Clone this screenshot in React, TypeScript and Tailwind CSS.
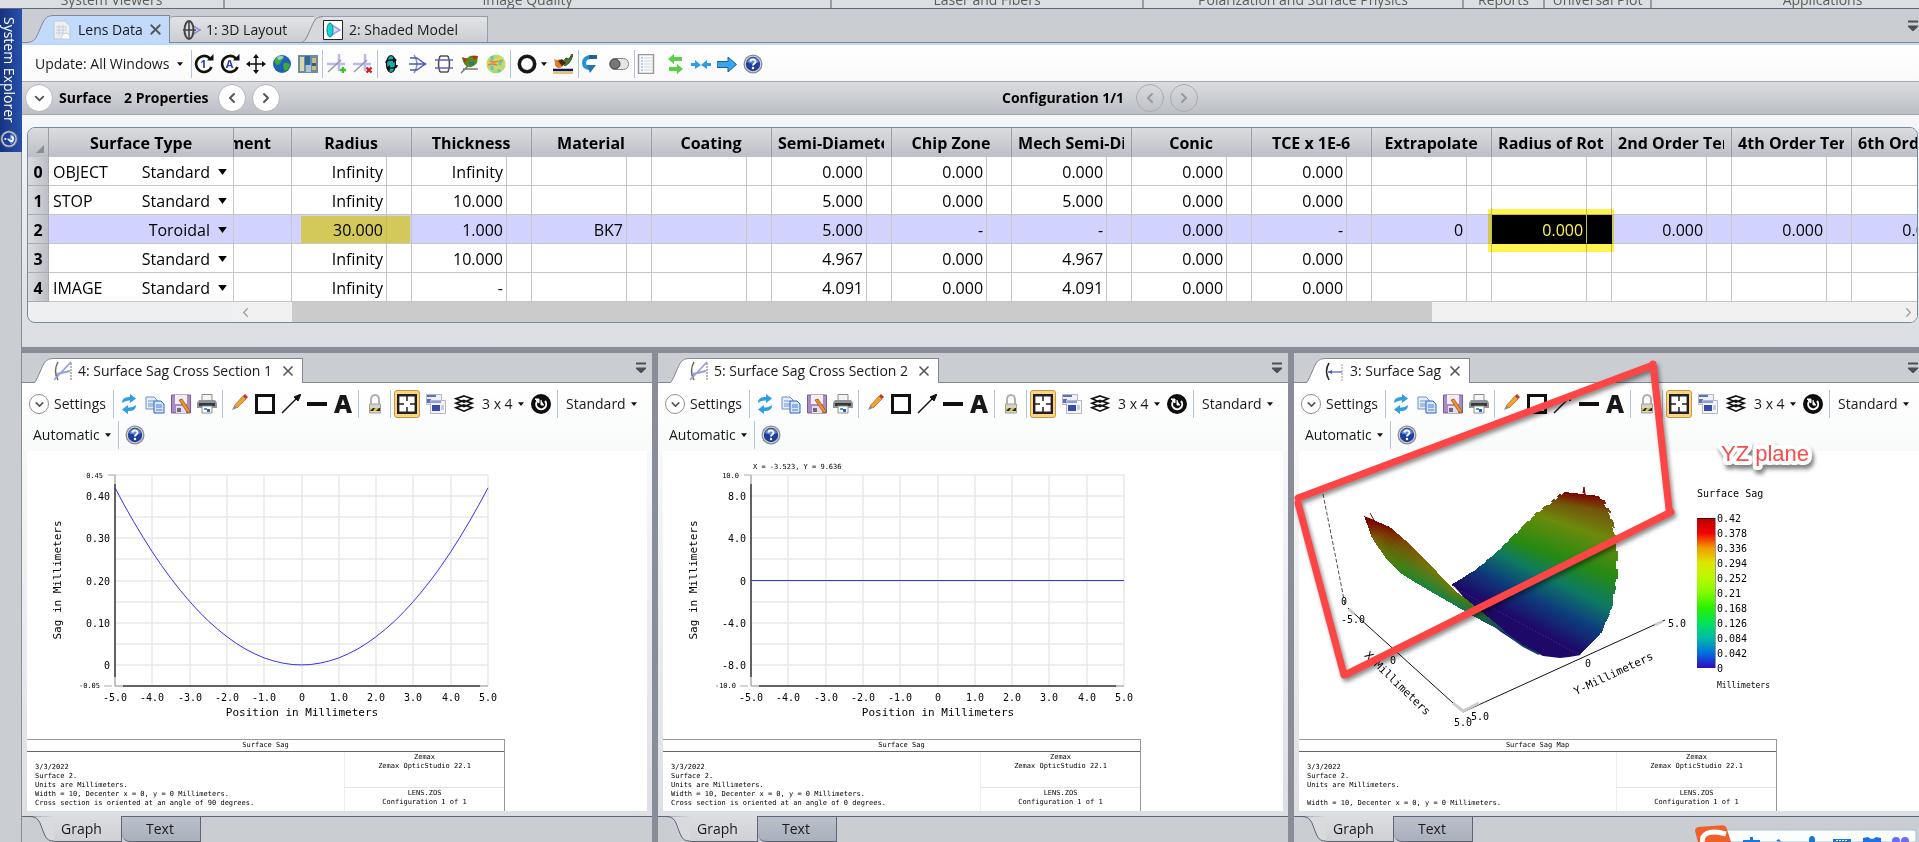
import { ReactNode } from 'react';
import clsx from 'clsx';
import { ChevronDown, ChevronLeft, ChevronRight, X } from 'lucide-react';

interface IconProps {
  children: ReactNode;
  label: string;
  className?: string;
}

// Toolbar glyphs are drawn on a 20x20 grid
const IconButton = ({ children, label, className }: IconProps) => (
  <button type="button" aria-label={label} className={clsx('h-5 w-5 shrink-0', className)}>
    <svg viewBox="0 0 20 20" className="h-5 w-5">{children}</svg>
  </button>
);

const Separator = ({ className }: { className?: string }) => (
  <div className={clsx('h-7 w-px shrink-0 bg-[#b4c6d6]', className)} />
);

const Caret = ({ className }: { className?: string }) => (
  <svg viewBox="0 0 8 5" className={clsx('h-[4px] w-[6px] shrink-0', className)}>
    <path d="M0 0h8L4 5z" fill="#111" />
  </svg>
);

const DropDown = ({ label, value, className }: { label: string; value: string; className: string }) => (
  <span className="flex shrink-0 items-center">
    <select aria-label={label} className={clsx('appearance-none bg-transparent outline-none', className)}>
      <option>{value}</option>
    </select>
    <Caret />
  </span>
);

const HelpIcon = () => (
  <g>
    <circle cx="10" cy="10" r="9.5" fill="#8b8b8f" />
    <circle cx="10" cy="10" r="8.3" fill="#d4d6dc" />
    <circle cx="10" cy="10" r="7.2" fill="#1f3f9c" />
    <path d="M4 8a6.4 6.4 0 0 1 12 0q-6 3-12 0" fill="#5d86d8" />
    <path d="M7.4 7.6C7.6 4.8 12.6 4.8 12.5 7.8c0 1.8-2.5 1.8-2.5 3.8" fill="none" stroke="#fff" strokeWidth="1.9" />
    <circle cx="10" cy="14" r="1.2" fill="#fff" />
  </g>
);

const MenuMark = () => (
  <button type="button" aria-label="Window list" className="h-3 w-[10px] shrink-0">
    <svg viewBox="0 0 10 12" className="h-3 w-[10px]">
      <path d="M0 1.5h10" stroke="#4c4f55" strokeWidth="2" />
      <path d="M0 5.5h10v1.2L5.5 11h-1L0 6.7z" fill="#4c4f55" />
    </svg>
  </button>
);

const RIBBON_GROUPS = [
  { name: 'System Viewers', width: 'w-[225px]' },
  { name: 'Image Quality', width: 'w-[607px]' },
  { name: 'Laser and Fibers', width: 'w-[312px]' },
  { name: 'Polarization and Surface Physics', width: 'w-[320px]' },
  { name: 'Reports', width: 'w-[81px]' },
  { name: 'Universal Plot', width: 'w-[107px]' },
];

const RibbonStrip = () => (
  <div className="flex h-[9px] shrink-0 overflow-hidden border-b border-[#5b6b7b] bg-[#dcdfe2] text-sm text-[#5c5c5c]">
    {RIBBON_GROUPS.map((group) => (
      <div key={group.name} className={clsx('flex shrink-0 items-end justify-center border-r-2 border-[#9a9da3] whitespace-nowrap', group.width)}>
        <span className="leading-4">{group.name}</span>
      </div>
    ))}
    <div className="flex grow items-end justify-center pl-[74px]">
      <span className="leading-4">Applications</span>
    </div>
  </div>
);

const SystemExplorer = () => (
  <aside className="flex w-[22px] shrink-0 flex-col border-r border-[#8a8c98] bg-[#cacdd2]">
    <button
      type="button"
      className="-mr-px flex h-[143px] flex-col items-center justify-between bg-linear-to-r from-[#17337f] to-[#2750ae] pt-2 pr-1 pb-1 text-sm text-white"
    >
      <span className="leading-[18px] whitespace-nowrap [writing-mode:vertical-rl]">System Explorer</span>
      <svg viewBox="0 0 20 20" className="h-[18px] w-[18px] rotate-90"><HelpIcon /></svg>
    </button>
  </aside>
);

// Slanted leading edge shared by the window tabs
const TabSlope = ({ fill }: { fill: string }) => (
  <svg viewBox="0 0 28 28" className="h-[28px] w-7 shrink-0">
    <path d="M0 28V27.500C9 27.500 10 23 14 14S19 .5 27 .5H28V28z" fill={fill} />
    <path d="M0 27.500C9 27.500 10 23 14 14S19 .5 28 .5" fill="none" stroke="#85878f" />
  </svg>
);

const LensIcon = () => (
  <svg viewBox="0 0 20 20" className="h-5 w-5">
    <path d="M8 4l10 6-10 6" fill="none" stroke="#8f93d8" strokeWidth="1.6" />
    <ellipse cx="7" cy="10" rx="4.500" ry="9" fill="#d8dadf" stroke="#444" strokeWidth="2" />
    <path d="M1 10h13M7 1v18" stroke="#444" strokeWidth="1.6" />
  </svg>
);

const MainTabs = () => (
  <div className="flex h-[34px] shrink-0 items-end border-b border-[#85878f] bg-[#cacdd2] pl-1 text-sm">
    <div className="-mb-px flex h-7 items-stretch">
      <TabSlope fill="#c2dbfc" />
      <button type="button" className="-ml-px flex w-[93px] items-center gap-[7px] border-t border-[#85878f] bg-[#c2dbfc]">
        <svg viewBox="0 0 18 20" className="h-5 w-[18px]">
          <path d="M1 1h11l5 5v13H1z" fill="#eceff3" stroke="#c3c8cf" />
          <path d="M3 7h11M3 10h11M3 13h8M6 5v11M10 5v11" stroke="#c9ced6" />
          <path d="M9 16q1-3 4-3t4 4v2H8z" fill="#fff" stroke="#c9ced6" />
        </svg>
        <span className="whitespace-nowrap">Lens Data</span>
      </button>
      <button type="button" aria-label="Close Lens Data" className="flex w-6 items-center justify-end border-t border-r border-[#85878f] bg-[#c2dbfc] pr-[5px]">
        <X size={17} strokeWidth={2.5} color="#555" />
      </button>
    </div>
    <button type="button" className="flex h-[26px] w-[144px] items-center gap-1 rounded-tl border-t border-[#9a9ca3] bg-linear-to-b from-[#e2e4e7] to-[#c9ccd1] pl-3">
      <LensIcon />
      <span>1: 3D Layout</span>
    </button>
    <div className="-ml-[18px] flex h-[26px] items-stretch overflow-hidden">
      <TabSlope fill="#d6d8dc" />
      <button type="button" className="-ml-px flex w-[165px] items-center gap-[6px] border-t border-r border-[#9a9ca3] bg-linear-to-b from-[#e2e4e7] to-[#c9ccd1]">
        <svg viewBox="0 0 20 20" className="h-5 w-5">
          <path d="M.5.5h19v19H.5z" fill="#fff" stroke="#222" />
          <path d="M7 4l10 6-10 6" fill="#dcdcff" stroke="#9a9cf0" strokeWidth="1.500" />
          <ellipse cx="7" cy="10" rx="3" ry="7" fill="#12d8d8" stroke="#16807c" />
        </svg>
        <span>2: Shaded Model</span>
      </button>
    </div>
    <div className="flex grow items-center justify-end self-stretch pr-px">
      <MenuMark />
    </div>
  </div>
);

const CycleIcon = ({ letter }: { letter: string }) => (
  <g>
    <path d="M16 4.500A8 8 0 1 0 17.500 13" fill="none" stroke="#111" strokeWidth="2.600" />
    <path d="M13 6.500h6.500V0z" fill="#111" />
    <text x="9.500" y="14" textAnchor="middle" fontSize="11" fontWeight="700" fill="#2c3fa8">{letter}</text>
  </g>
);

const LensToolbar = () => (
  <div className="flex h-9 shrink-0 items-center gap-[6px] bg-linear-to-b from-white to-[#fafafb] pt-[2px] pl-[13px] text-sm">
    <DropDown label="Update" value="Update: All Windows" className="w-[142px]" />
    <Separator className="ml-[2px] -mr-1" />
    <IconButton label="Update once"><CycleIcon letter="1" /></IconButton>
    <IconButton label="Update all"><CycleIcon letter="A" /></IconButton>
    <IconButton label="Move">
      <path d="M10 2v16M2 10h16" stroke="#111" strokeWidth="1.500" />
      <path d="M10 0l3 4H7zM10 20l-3-4h6zM0 10l4-3v6zM20 10l-4 3V7z" fill="#111" />
    </IconButton>
    <IconButton label="Global">
      <circle cx="10" cy="10" r="9" fill="#1d62b8" />
      <path d="M3 5q4-4 8-3 1 3-2 5-1 4-4 4-3-2-2-6M12 9q5-1 6 2-1 5-5 6-3-4-1-8" fill="#3faa3a" />
      <path d="M5 3q4-2 7 0-2 3-6 3z" fill="#b9e4f2" opacity=".7" />
    </IconButton>
    <IconButton label="Catalog">
      <path d="M0 1h20v18H0z" fill="#6d8ba5" />
      <path d="M2 3h4v14H2z" fill="#d8d8a8" /><path d="M7 2h5v9H7z" fill="#2c6a9c" />
      <path d="M8 11h5v7H8z" fill="#a8c6d8" /><path d="M14 4h4v12h-4z" fill="#cdb878" />
      <path d="M14 9h4v3h-4z" fill="#3a5a7a" />
    </IconButton>
    <Separator className="-mx-[2px]" />
    <IconButton label="Insert surface">
      <path d="M12 0v17M0 10h18" stroke="#b9b9f0" strokeWidth="2.500" /><path d="M1 18L14 6" stroke="#999" strokeWidth="1.500" />
      <path d="M16 13v6M13 16h6" stroke="#35c524" strokeWidth="2.400" />
    </IconButton>
    <IconButton label="Delete surface">
      <path d="M12 0v17M0 10h18" stroke="#b9b9f0" strokeWidth="2.500" /><path d="M1 18L14 6" stroke="#999" strokeWidth="1.500" />
      <path d="M13.500 13.500l5 5M18.500 13.500l-5 5" stroke="#cf2020" strokeWidth="2.400" />
    </IconButton>
    <Separator className="-mx-[2px]" />
    <IconButton label="Tilt element">
      <ellipse cx="9" cy="10" rx="4.500" ry="8.500" fill="#13b0a6" stroke="#111" strokeWidth="1.200" />
      <path d="M4 9q0-3 5-3h3M15 11q0 3-5 3H8" fill="none" stroke="#111" strokeWidth="1.700" />
      <path d="M11 3l4 3-4 3zM8 11l-4 3 4 3z" fill="#111" />
    </IconButton>
    <IconButton label="Local axis">
      <path d="M6 1q6 9 0 18" fill="none" stroke="#8890b0" strokeWidth="1.500" />
      <path d="M2 4h7l8 6-8 6H2M1 10h17" fill="none" stroke="#4a5ab6" strokeWidth="1.300" />
      <path d="M15 8l4 2-4 2z" fill="#4a5ab6" />
    </IconButton>
    <IconButton label="Double pass">
      <path d="M6 2q-3 8 0 16M14 2q3 8 0 16M6 2h8M6 18h8" fill="none" stroke="#555" strokeWidth="1.600" />
      <path d="M1 6h18M1 14h18" stroke="#5668c0" strokeWidth="1.600" />
    </IconButton>
    <IconButton label="Surface plot">
      <path d="M1 19l7-7M3 15h15" stroke="#777" strokeWidth="1.500" />
      <path d="M2 3q4 3 8-1 4-1 8 0l-1 7q-4 5-9 4-5-2-6-10" fill="#5f8a18" />
      <path d="M2 3l5 2-2 4zM11 2l7 0-3 4z" fill="#b2331c" /><path d="M9 8h5v3H9z" fill="#1d7f8c" />
    </IconButton>
    <IconButton label="Phase map">
      <circle cx="10" cy="10" r="9.500" fill="#a8dc78" />
      <path d="M3 4q7 4 13-1M1 10q9-4 18 1M3 15q7-4 14 1" fill="none" stroke="#ecd04c" strokeWidth="2.500" />
      <path d="M4 7q5 2 8 0M2 11q4-2 9 0M13 7h4" fill="none" stroke="#e2784e" strokeWidth="1.500" />
      <path d="M6 2v4M14 7v4M6 12v4M13 15v3" stroke="#59c8cc" strokeWidth="3" />
    </IconButton>
    <Separator className="-ml-[2px]" />
    <IconButton label="Aperture"><circle cx="10" cy="10" r="7.700" fill="none" stroke="#1a1718" strokeWidth="3.600" /></IconButton>
    <Caret className="-ml-[2px]" />
    <IconButton label="Coating brush">
      <path d="M9 9l4-5 3 1 3-5 1 1-2 5-2 3-4 3z" fill="#4d7a3a" stroke="#2f5524" />
      <path d="M1 5q4 2 6 0l4 5q-1 4-6 4-4-2-3-5z" fill="#e47d28" />
      <path d="M5 7l4-2 4 4-4 3z" fill="#4b2610" />
      <path d="M0 16h20" stroke="#111b4a" strokeWidth="2.500" /><path d="M0 19h20" stroke="#e6ae3c" strokeWidth="1.500" />
    </IconButton>
    <Separator className="-ml-px -mr-1" />
    <IconButton label="Reverse">
      <path d="M16 3H9Q3 4 3 9t6 5" fill="none" stroke="#2492dc" strokeWidth="4" />
      <path d="M6 11h9l-6 8z" fill="#2273b4" /><path d="M8 1h8v4H8z" fill="#255f96" />
    </IconButton>
    <IconButton label="Toggle" className="ml-[2px]">
      <rect x=".8" y="4.500" width="18.700" height="11" rx="5" fill="#e5e5e5" stroke="#888" />
      <circle cx="6" cy="10" r="5" fill="#777" stroke="#444" />
    </IconButton>
    <Separator className="-ml-px -mr-1" />
    <IconButton label="Report" className="mr-[2px]">
      <path d="M1.500.5h15v19h-15z" fill="#f8fafc" stroke="#999" strokeWidth="1.500" />
      <path d="M4 4h2M4 7h2M4 10h2M4 13h2M4 16h2" stroke="#7fa2c8" /><path d="M7 4h8M7 7h8M7 10h8M7 13h8M7 16h8" stroke="#ccd9e8" />
    </IconButton>
    <IconButton label="Swap">
      <path d="M3 5l6-5v3h8v4H9v3z" fill="#59d043" /><path d="M18 15l-6-5v3H4v4h8v3z" fill="#59d043" />
    </IconButton>
    <IconButton label="Collapse">
      <path d="M0 9h4V6l6 5-6 4v-3H0zM20 9h-4V6l-6 5 6 4v-3h4z" fill="#2e9fe6" />
    </IconButton>
    <IconButton label="Go to"><path d="M0 7.500h11V3l8.500 7.500L11 18v-4.500H0z" fill="#38a5ec" stroke="#1b5e96" /></IconButton>
    <IconButton label="Help"><HelpIcon /></IconButton>
  </div>
);

const RoundButton = ({ label, children, muted }: { label: string; children: ReactNode; muted?: boolean }) => (
  <button
    type="button"
    aria-label={label}
    className={clsx(
      'flex h-7 w-7 shrink-0 items-center justify-center rounded-full border text-[#555]',
      muted ? 'border-[#a8aaae] text-[#96989c]' : 'border-[#b4b6ba] bg-white'
    )}
  >
    {children}
  </button>
);

const PropertiesBar = () => (
  <div className="grid h-[34px] shrink-0 grid-cols-[980px_1fr] items-center border-y border-[#a6a8ad] bg-linear-to-b from-[#dadce0] to-[#bcbfc6] text-sm font-bold text-black">
    <div className="flex items-center pl-[3px]">
      <RoundButton label="Expand properties"><ChevronDown size={15} strokeWidth={3} /></RoundButton>
      <span className="w-[71px] pl-[6px]">Surface</span>
      <span className="w-[94px]">2 Properties</span>
      <div className="flex gap-[6px]">
        <RoundButton label="Previous surface"><ChevronLeft size={16} strokeWidth={3} /></RoundButton>
        <RoundButton label="Next surface"><ChevronRight size={16} strokeWidth={3} /></RoundButton>
      </div>
    </div>
    <div className="flex items-center">
      <span className="w-[134px]">Configuration 1/1</span>
      <div className="flex gap-[6px]">
        <RoundButton label="Previous configuration" muted><ChevronLeft size={16} strokeWidth={3} /></RoundButton>
        <RoundButton label="Next configuration" muted><ChevronRight size={16} strokeWidth={3} /></RoundButton>
      </div>
    </div>
  </div>
);

const COLUMNS = [
  'Radius', 'Thickness', 'Material', 'Coating', 'Semi-Diameter', 'Chip Zone', 'Mech Semi-Dia', 'Conic',
  'TCE x 1E-6', 'Extrapolate', 'Radius of Rotation', '2nd Order Term', '4th Order Term', '6th Order Term',
];

interface SurfaceRow {
  role: string;
  type: string;
  values: string[];
}

const ROWS: SurfaceRow[] = [
  { role: 'OBJECT', type: 'Standard', values: ['Infinity', 'Infinity', '', '', '0.000', '0.000', '0.000', '0.000', '0.000', '', '', '', '', ''] },
  { role: 'STOP', type: 'Standard', values: ['Infinity', '10.000', '', '', '5.000', '0.000', '5.000', '0.000', '0.000', '', '', '', '', ''] },
  { role: '', type: 'Toroidal', values: ['30.000', '1.000', 'BK7', '', '5.000', '-', '-', '0.000', '-', '0', '0.000', '0.000', '0.000', '0.000'] },
  { role: '', type: 'Standard', values: ['Infinity', '10.000', '', '', '4.967', '0.000', '4.967', '0.000', '0.000', '', '', '', '', ''] },
  { role: 'IMAGE', type: 'Standard', values: ['Infinity', '-', '', '', '4.091', '0.000', '4.091', '0.000', '0.000', '', '', '', '', ''] },
];

const SELECTED_ROW = 2;
const ACTIVE_COLUMN = 10;

const HEAD_CELL = 'h-[29px] overflow-hidden border-r border-[#9a9da4] bg-linear-to-b from-[#dadce0] to-[#bcbfc6] p-0 pt-px font-bold whitespace-nowrap';

const LensTable = () => (
  <div className="bg-linear-to-b from-[#f6f7f9] to-[#dadde1] pt-3 pr-px pb-6 pl-[5px]">
    <div className="overflow-hidden rounded-lg border border-[#6f8ea4] bg-[#eeeff0]">
      <table className="w-[1944px] table-fixed border-separate border-spacing-0 text-base text-black">
        <colgroup>
          <col className="w-[21px]" />
          <col className="w-[185px]" />
          <col className="w-[58px]" />
          {COLUMNS.map((name) => [
            <col key={name} className="w-[95px]" />,
            <col key={`${name}-status`} className="w-[25px]" />,
          ])}
        </colgroup>
        <thead>
          <tr>
            <th className={HEAD_CELL} aria-label="Row">
              <svg viewBox="0 0 20 27" className="h-[27px] w-5"><path d="M16 15v8H8z" fill="#8b8e94" /></svg>
            </th>
            <th scope="col" className={HEAD_CELL}>Surface Type</th>
            <th scope="col" className={HEAD_CELL}>
              <div className="flex justify-end pr-5">Comment</div>
            </th>
            {COLUMNS.map((name) => (
              <th key={name} scope="col" colSpan={2} className={HEAD_CELL}>
                <div className={clsx('mr-[7px] ml-[6px] overflow-hidden', name.length > 12 && 'text-left')}>{name}</div>
              </th>
            ))}
          </tr>
        </thead>
        <tbody>
          {ROWS.map((row, r) => {
            const cell = clsx('relative h-[29px] border-r border-b border-[#c6c6c6] p-0 pt-px whitespace-nowrap', r === SELECTED_ROW ? 'bg-[#d2d2ff]' : 'bg-white');
            return (
              <tr key={r}>
                <th scope="row" className="h-[29px] border-r border-b border-[#a9acb2] bg-linear-to-r from-[#dadce0] to-[#bcbfc6] p-0 pt-px text-center font-bold">{r}</th>
                <td className={cell}>
                  <div className="flex items-center pr-[6px] pl-1">
                    <span>{row.role}</span>
                    <select
                      aria-label={`Surface ${r} type`}
                      className="ml-auto w-[100px] appearance-none bg-transparent text-right [text-align-last:right] outline-none"
                    >
                      <option>{row.type}</option>
                    </select>
                    <svg viewBox="0 0 10 7" className="ml-2 h-[6px] w-[9px]"><path d="M0 0h10L5 7z" /></svg>
                  </div>
                </td>
                <td className={cell} />
                {row.values.map((value, c) => {
                  const active = r === SELECTED_ROW && c === ACTIVE_COLUMN;
                  const marked = r === SELECTED_ROW && c === 0;
                  return [
                    <td key={c} className={clsx(cell, 'pr-[3px] text-right', active && 'border-b-black bg-black text-white')}>
                      {value}
                      {active && <span className="absolute -top-[6px] -left-1 z-10 h-[43px] w-[126px] bg-[#fff352] mix-blend-multiply" />}
                      {marked && <span className="absolute top-px left-[9px] z-10 h-[27px] w-[109px] bg-[#fff55a] mix-blend-multiply" />}
                    </td>,
                    <td key={`${c}-status`} className={clsx(cell, active && 'border-r-black border-b-black bg-black')} />,
                  ];
                })}
              </tr>
            );
          })}
        </tbody>
      </table>
      <div className="flex h-5 items-stretch text-[#a0a0a0]">
        <div className="w-[206px]" />
        <button type="button" aria-label="Scroll left" className="flex w-[58px] items-center bg-[#f0f0f0] pl-1"><ChevronLeft size={15} /></button>
        <div className="w-[1140px] bg-[#cbcbcb]" />
        <button type="button" aria-label="Scroll right" className="flex grow items-center justify-end bg-[#f0f0f0] pr-px"><ChevronRight size={15} /></button>
      </div>
    </div>
  </div>
);

const GraphToolbar = () => (
  <div className="flex h-[68px] shrink-0 flex-col gap-[2px] bg-linear-to-b from-white to-[#f9fafa] pt-[7px] text-sm">
    <div className="flex h-7 items-center gap-[6px] pl-[7px]">
      <button type="button" className="flex w-[78px] shrink-0 items-center gap-[5px]">
        <span className="flex h-5 w-5 shrink-0 items-center justify-center rounded-full border border-[#909090] bg-white">
          <ChevronDown size={13} strokeWidth={3} color="#555" />
        </span>
        Settings
      </button>
      <Separator className="-mr-px" />
      <IconButton label="Refresh">
        <path d="M3 9q0-6 7-6h1V0l6 4.500L11 9V6.500Q7 6 3 9" fill="#2f9fe0" />
        <path d="M17 11q0 6-7 6H9v3l-6-4.500L9 11v2.500q4 .5 8-2.500" fill="#2f9fe0" />
      </IconButton>
      <IconButton label="Copy">
        <path d="M1 3h8l3 3v9H1z" fill="#e6effb" stroke="#6f90c8" /><path d="M3 7h6M3 10h6M3 12h6" stroke="#6f90c8" />
        <path d="M9 7h7l3 3v9H9z" fill="#d7e5fa" stroke="#2e62b8" /><path d="M11 11h6M11 13h6M11 16h6" stroke="#4a7fd0" />
      </IconButton>
      <IconButton label="Save">
        <path d="M.5 1h19v18H.5z" fill="#a98bc8" stroke="#7d5c9c" /><path d="M4 1h12v9H4z" fill="#f1eef6" /><path d="M5 12h10v7H5z" fill="#e2dcec" /><path d="M6 14h4v4H6z" fill="#6e6a80" />
        <path d="M8 6l3-1 8 12-1 2-2-1z" fill="#eb9526" stroke="#9a4a10" strokeWidth=".7" />
      </IconButton>
      <IconButton label="Print">
        <path d="M5 .5h10v7H5z" fill="#f4f4f4" stroke="#8d8d8d" />
        <path d="M2 6h16l2 3v5H0V9z" fill="#8f9296" /><path d="M2 9h16v3H2z" fill="#37383a" />
        <path d="M5 12h10v7H5z" fill="#fff" stroke="#8d8d8d" /><path d="M7 14h3v2H7z" fill="#3ca0c8" /><path d="M10 15h3v3h-3z" fill="#2d62b0" />
      </IconButton>
      <Separator className="-ml-px" />
      <IconButton label="Pencil">
        <path d="M5 12L14 2l3 3L8 14z" fill="#f0a22c" stroke="#a5631c" strokeWidth=".7" /><path d="M14 2l2-2 3 3-2 2z" fill="#cc2f34" /><path d="M5 12l3 2-5 2z" fill="#888" />
      </IconButton>
      <IconButton label="Rectangle"><path d="M1.500 1.500h17v17h-17z" fill="#fff" stroke="#111" strokeWidth="3" /></IconButton>
      <IconButton label="Arrow">
        <path d="M1 19L16 4" stroke="#111" strokeWidth="1.500" /><path d="M20 0l-3 7-4-4z" fill="#111" stroke="#111" />
      </IconButton>
      <IconButton label="Line"><path d="M0 10h20" stroke="#111" strokeWidth="4" /></IconButton>
      <IconButton label="Text"><path d="M1 19L7 1h6l6 18h-5l-1-4H7l-1 4zM8 11h4l-2-6z" fill="#1a1718" /></IconButton>
      <Separator className="-ml-px" />
      <IconButton label="Lock">
        <path d="M6 11V6q0-5 4-5t4 5v5" fill="none" stroke="#b0b0b0" strokeWidth="2" />
        <path d="M4.500 10h11v9h-11z" fill="#d2d2ce" stroke="#a0a09c" /><path d="M5 14h10v3H5z" fill="#e3c12d" /><path d="M5 17l3-3h2l-2 3zM11 17l3-3h1v3z" fill="#222" />
      </IconButton>
      <Separator className="-ml-px" />
      <button type="button" aria-label="Fit window" className="-ml-[3px] flex h-7 w-[26px] shrink-0 items-center justify-center rounded-[3px] border border-[#c79a3a] bg-[#fbd387]">
        <svg viewBox="0 0 20 20" className="h-5 w-5">
          <path d="M1.200 1.200h17.600v17.600H1.200z" fill="#fff" stroke="#231f20" strokeWidth="2.400" />
          <path d="M10 2v5M10 13v5M2 10h5M13 10h5" stroke="#231f20" strokeWidth="1.500" />
        </svg>
      </button>
      <IconButton label="Windows">
        <path d="M.5.500h15v10H.5z" fill="#eef0f6" stroke="#b4b8c6" /><path d="M1 1h9v2H1zM1 5h4v4H1z" fill="#5b6ec0" />
        <path d="M4.500 6.500h15v13h-15z" fill="#f4f5f9" stroke="#b4b8c6" /><path d="M5 7h10v2H5z" fill="#8d9be0" /><path d="M6 11h8v6H6z" fill="#3a4aa8" /><path d="M15 11h3v5h-3z" fill="#c9cedd" />
      </IconButton>
      <button type="button" aria-label="Layers" className="ml-[2px] h-5 w-5 shrink-0">
        <svg viewBox="0 0 20 20" className="h-5 w-5">
          <g fill="#fff" stroke="#111" strokeWidth="1.700">
            <path d="M10 11l8 2.800-8 3.400-8-3.400zM10 6.500l8 2.800-8 3.400-8-3.400zM10 2l8 2.800-8 3.400-8-3.400z" />
          </g>
        </svg>
      </button>
      <DropDown label="Grid size" value="3 x 4" className="ml-[2px] w-9" />
      <button type="button" aria-label="Refresh timer" className="ml-[1px] h-5 w-5 shrink-0">
        <svg viewBox="0 0 20 20" className="h-5 w-5">
          <circle cx="10" cy="10" r="10" fill="#0d0d0d" />
          <path d="M6 7.500A5 5 0 1 0 14 7" fill="none" stroke="#fff" strokeWidth="2" /><path d="M4 5h4v4zM10 6v5h3" fill="#fff" stroke="#fff" />
        </svg>
      </button>
      <Separator />
      <DropDown label="Line style" value="Standard" className="ml-[2px] w-[65px]" />
    </div>
    <div className="flex h-7 items-center pt-px pl-[11px]">
      <DropDown label="Scale mode" value="Automatic" className="w-[72px]" />
      <Separator className="mr-[6px] ml-[7px]" />
      <IconButton label="Help"><HelpIcon /></IconButton>
    </div>
  </div>
);

interface SagPlotProps {
  yLabels: { text: string; step: number }[];
  limits: [string, string];
  curve: string;
  cursor?: string;
}

const X_TICKS = ['-5.0', '-4.0', '-3.0', '-2.0', '-1.0', '0', '1.0', '2.0', '3.0', '4.0', '5.0'];
const PLOT = { left: 88, top: 24, width: 373, height: 211 };

const SagPlot = ({ yLabels, limits, curve, cursor }: SagPlotProps) => {
  const steps = X_TICKS.map((_, i) => i);
  const px = (i: number) => Math.round(PLOT.left + (PLOT.width * i) / 10);
  const py = (i: number) => Math.round(PLOT.top + (PLOT.height * i) / 10);
  const bottom = PLOT.top + PLOT.height;
  return (
    <svg viewBox="0 0 620 288" className="h-[288px] w-[620px] shrink-0 font-['DejaVu_Sans_Mono',monospace]">
      {steps.map((i) => (
        <g key={i} stroke="#e9e9e9" strokeWidth="1.500">
          <path d={`M${px(i)} ${PLOT.top}V${bottom}`} />
          <path d={`M${PLOT.left} ${py(i)}H${PLOT.left + PLOT.width}`} />
        </g>
      ))}
      <path d={`M${PLOT.left} ${PLOT.top}V${bottom}H${PLOT.left + PLOT.width}`} fill="none" stroke="#999" />
      <path d="M88 33V226M96 235H453" stroke="#000" />
      <path d="M81 24h7M77 235h8" stroke="#aaa" />
      <path d={curve} fill="none" stroke="#3232ff" />
      {yLabels.map((label) => (
        <text key={label.text} x="83" y={py(label.step) + 4} textAnchor="end" fontSize="10">{label.text}</text>
      ))}
      <text x="76" y="27" textAnchor="end" fontSize="7">{limits[0]}</text>
      <text x="73" y="237" textAnchor="end" fontSize="7">{limits[1]}</text>
      {cursor && <text x="90" y="18" fontSize="7">{cursor}</text>}
      {X_TICKS.map((tick, i) => (
        <text key={tick} x={px(i)} y="250" textAnchor="middle" fontSize="10">{tick}</text>
      ))}
      <text x="275" y="265" textAnchor="middle" fontSize="11">Position in Millimeters</text>
      <text transform="translate(34 129) rotate(-90)" textAnchor="middle" fontSize="11">Sag in Millimeters</text>
    </svg>
  );
};

// Meridional sag of a sphere with a 30 mm radius, over +/-5 mm
const sphereCurve = () => {
  const points: string[] = [];
  for (let y = -5; y <= 5.01; y += 0.25) {
    const sag = 30 - Math.sqrt(900 - y * y);
    const x = PLOT.left + ((y + 5) / 10) * PLOT.width;
    const top = PLOT.top + ((0.45 - sag) / 0.5) * PLOT.height;
    points.push(`${x.toFixed(1)} ${top.toFixed(1)}`);
  }
  return `M${points.join('L')}`;
};

type Point = number[];

const lerp = (list: Point[], t: number): Point => {
  const at = Math.min(t, 0.9999) * (list.length - 1);
  const i = Math.floor(at);
  return list[i].map((v, k) => v + (list[i + 1][k] - v) * (at - i));
};

const mix = (a: Point, b: Point, s: number): Point => a.map((v, k) => v + (b[k] - v) * s);

interface SheetProps {
  from: Point[];
  to: Point[];
  fromColors: Point[];
  toColors: Point[];
  rows: number;
  columns: number;
  jag: number;
}

// Shaded patch spanned between two edge polylines
const Sheet = ({ from, to, fromColors, toColors, rows, columns, jag }: SheetProps) => {
  const cells: ReactNode[] = [];
  for (let r = 0; r < rows; r++) {
    const t0 = r / rows;
    const t1 = (r + 1.3) / rows;
    // steps get coarser towards the rim
    const shift = r % 6 < 3 ? jag * t0 : 0;
    for (let c = 0; c < columns; c++) {
      const s0 = c / columns;
      const s1 = Math.min(1, (c + 1.1) / columns);
      const left = c === 0 ? -shift : 0;
      const right = c === columns - 1 ? shift : 0;
      const corners = [
        mix(lerp(from, t0), lerp(to, t0), s0),
        mix(lerp(from, t0), lerp(to, t0), s1),
        mix(lerp(from, t1), lerp(to, t1), s1),
        mix(lerp(from, t1), lerp(to, t1), s0),
      ].map(([x, y], k) => `${(x + (k === 0 || k === 3 ? left : right)).toFixed(1)},${y.toFixed(1)}`);
      const color = mix(lerp(fromColors, t0), lerp(toColors, t0), s0).map(Math.round);
      cells.push(<polygon key={`${r}-${c}`} points={corners.join(' ')} fill={`rgb(${color.join(',')})`} />);
    }
  }
  return <g shapeRendering="crispEdges">{cells}</g>;
};

const FAR_LEFT = [[152, 134], [178, 118], [197, 102], [211, 89], [236, 64], [254, 51], [266, 41]];
const FAR_RIGHT = [[281, 204], [302, 182], [312, 158], [317, 128], [317, 92], [310, 62], [300, 45]];
const FAR_COLORS = [[30, 8, 104], [12, 62, 124], [14, 122, 98], [38, 138, 18], [108, 138, 12], [116, 84, 10], [122, 0, 0]];
const NEAR_TOP = [[65, 65], [91, 76], [106, 89], [126, 109], [138, 121], [154, 138], [172, 152], [206, 180]];
const NEAR_BOTTOM = [[67, 70], [73, 87], [88, 109], [104, 124], [124, 136], [150, 151], [174, 165], [206, 182]];
const NEAR_TOP_COLORS = [[122, 0, 0], [122, 22, 0], [122, 74, 6], [120, 112, 8], [112, 122, 8], [100, 124, 10], [60, 124, 12], [20, 60, 100]];
const NEAR_BOTTOM_COLORS = [[122, 0, 0], [122, 110, 8], [70, 138, 12], [24, 138, 40], [12, 136, 70], [12, 128, 80], [12, 110, 96], [20, 50, 110]];

const LEGEND = ['0.42', '0.378', '0.336', '0.294', '0.252', '0.21', '0.168', '0.126', '0.084', '0.042', '0'];
const LEGEND_COLORS = ['#b80000', '#f40000', '#f09c00', '#e0e600', '#b8fa00', '#80fa00', '#28f000', '#00e45a', '#00bca8', '#0070e0', '#3208c0'];

const SurfacePlot = () => (
  <svg viewBox="0 0 620 288" className="h-[288px] w-[620px] shrink-0 font-['DejaVu_Sans_Mono',monospace]">
    <defs>
      <linearGradient id="sag-scale" x1="0" y1="0" x2="0" y2="1">
        {LEGEND_COLORS.map((color, i) => <stop key={color} offset={`${i * 10}%`} stopColor={color} />)}
      </linearGradient>
    </defs>
    <path d="M24 43L41 128L46 154" fill="none" stroke="#222" strokeDasharray="4 2" strokeWidth=".8" />
    <path d="M49 157L164 261L366 169" fill="none" stroke="#111" />
    <path d="M154 252L164 260L180 252M356 174l8-4M50 158l5 5" fill="none" stroke="#ccc" strokeWidth="3" />
    <path d="M154 134L282 204L270 206L261 207L244 205L224 195L202 181L180 164z" fill="#1e0868" />
    <path d="M206 182L224 195L240 203" fill="none" stroke="#14406e" strokeWidth="2" />
    <Sheet from={FAR_LEFT} to={FAR_RIGHT} fromColors={FAR_COLORS} toColors={FAR_COLORS} rows={72} columns={1} jag={3} />
    <path d="M284 42l1-6 1 7" fill="#700" stroke="#700" />
    <path d="M154 136L281 204" stroke="#6a5cb0" strokeWidth=".6" strokeDasharray="1 2" />
    <Sheet from={NEAR_TOP} to={NEAR_BOTTOM} fromColors={NEAR_TOP_COLORS} toColors={NEAR_BOTTOM_COLORS} rows={60} columns={6} jag={0} />
    <path d="M66 66l8 3M71 62l4 7" stroke="#600" />
    <g fontSize="10" textAnchor="middle">
      <text x="45" y="154">0</text>
      <text x="54" y="172">-5.0</text>
      <text x="94" y="213">0</text>
      <text x="164" y="275">5.0</text>
      <text x="178" y="269">-5.0</text>
      <text x="289" y="216">0</text>
      <text x="378" y="176">5.0</text>
    </g>
    <text transform="translate(96 235) rotate(44)" textAnchor="middle" fontSize="11">X-Millimeters</text>
    <text transform="translate(316 226) rotate(-25)" textAnchor="middle" fontSize="11">Y-Millimeters</text>
    <text x="398" y="46" fontSize="10">Surface Sag</text>
    <rect x="398" y="67" width="18" height="150" fill="url(#sag-scale)" />
    <path d="M398 67.500h18" stroke="#400" />
    <path d="M416.500 67v150" stroke="#999" />
    {LEGEND.map((value, i) => (
      <text key={value} x="418" y={71 + i * 15} fontSize="10">{value}</text>
    ))}
    <text x="418" y="237" fontSize="8">Millimeters</text>
  </svg>
);

const PlotFooter = ({ title, notes }: { title: string; notes: string[] }) => (
  <div className="flex h-[72px] w-[478px] shrink-0 flex-col border-t border-r border-[#999] font-['DejaVu_Sans_Mono',monospace] text-[7px] leading-[9px] text-black">
    <div className="flex h-3 shrink-0 items-center justify-center border-b border-[#666]">{title}</div>
    <div className="flex grow">
      <div className="w-[318px] shrink-0 border-r border-[#eee] pt-[11px] pl-2 whitespace-pre">
        {notes.map((note, i) => <p key={i} className="h-[9px]">{note}</p>)}
      </div>
      <div className="grow text-center">
        <div className="h-9 border-b border-[#e4e4e4] pt-px">
          <p>Zemax</p>
          <p>Zemax OpticStudio 22.1</p>
        </div>
        <div className="pt-px">
          <p>LENS.ZOS</p>
          <p>Configuration 1 of 1</p>
        </div>
      </div>
    </div>
  </div>
);

interface PanelProps {
  title: string;
  icon: ReactNode;
  tabWidth: string;
  footer: string;
  notes: string[];
  children: ReactNode;
  overlay?: ReactNode;
}

const GraphPanel = ({ title, icon, tabWidth, footer, notes, children, overlay }: PanelProps) => (
  <section className="relative flex min-w-0 flex-col bg-linear-to-b from-white to-[#dadde2]">
    <div className="flex h-[30px] shrink-0 items-end border-b border-[#85878f] bg-[#cacdd2] pl-1">
      <div className="-mb-px flex h-[25px] items-stretch overflow-hidden text-sm">
        <TabSlope fill="#fff" />
        <div className={clsx('-ml-px flex items-center gap-[5px] border-t border-r border-[#85878f] bg-white', tabWidth)}>
          <svg viewBox="0 0 20 20" className="h-5 w-5 shrink-0">{icon}</svg>
          <button type="button" className="whitespace-nowrap">{title}</button>
          <button type="button" aria-label={`Close ${title}`} className="mr-[6px] ml-auto">
            <X size={16} strokeWidth={2.5} color="#555" />
          </button>
        </div>
      </div>
      <div className="flex grow items-center justify-end self-stretch pr-[6px]"><MenuMark /></div>
    </div>
    <GraphToolbar />
    <div className="mx-[5px] flex min-h-0 grow flex-col overflow-hidden bg-white">
      {children}
      <PlotFooter title={footer} notes={notes} />
    </div>
    <div className="mt-[5px] flex h-[26px] shrink-0 border-t border-[#5d6379] bg-[#cacdd2] pl-2 text-sm">
      <div className="-mt-px flex h-[26px]">
        <svg viewBox="0 0 24 26" className="h-[26px] w-6 shrink-0">
          <path d="M0 .5C9 .5 10 7 13 15s5 10 11 10V0z" fill="#d9dadd" />
          <path d="M0 .5C9 .5 10 7 13 15s5 10 11 10" fill="none" stroke="#5d6379" />
        </svg>
        <button type="button" className="w-[68px] border-r border-b border-[#5d6379] bg-linear-to-b from-[#dcdde0] to-[#cfd1d5] pr-3">Graph</button>
        <button type="button" className="w-[79px] rounded-bl-lg border-t border-r border-b border-[#5d6379] bg-linear-to-b from-[#bbc1ca] to-[#a9b0bc] pr-[2px]">Text</button>
      </div>
    </div>
    {overlay}
  </section>
);

// Hand-placed markup above the surface plot
const PlaneAnnotation = () => (
  <svg viewBox="0 0 630 489" className="pointer-events-none absolute top-0 left-0 h-[489px] w-[630px] overflow-visible">
    <g className="drop-shadow-[2px_3px_2px_rgba(0,0,0,0.45)]">
      <path d="M4 145L359 12M359 11L375 156M377 159L53 321M50 322L4 150" fill="none" stroke="#fd4545" strokeWidth="7" strokeLinecap="round" />
    </g>
    <g className="drop-shadow-[2px_4px_2px_rgba(0,0,0,0.5)]">
      <text
        x="427" y="108" fontSize="22" fill="#fb4a4a" stroke="#fff" strokeWidth="8" strokeLinejoin="round"
        className="font-['Liberation_Sans',sans-serif] [paint-order:stroke]"
      >
        YZ plane
      </text>
    </g>
  </svg>
);

const ImeBar = () => (
  <div className="absolute right-[2px] bottom-0 flex h-[17px] w-[222px] items-end overflow-hidden">
    <svg viewBox="0 0 222 17" className="h-[17px] w-[222px]">
      <path d="M12 17V7q0-2 3-2H219q2 0 2 2V17z" fill="#fbfdff" stroke="#a9c4e0" />
      <path d="M0 6q0-3 3-4L27 .3q4 0 5 4L36 17H3z" fill="#f0602a" />
      <path d="M31 9Q13 4 8 12q-1 3 0 5" fill="none" stroke="#fff" strokeWidth="5" />
      <g fill="#1478e0">
        <path d="M48 15h17v2H48zM55 12h3v5h-3zM81 16l3-2 2 3zM117 11q3 0 3 4v2h-6v-2q0-4 3-4M138 14h18v3h-18zM168 13l5-1q4 4 8 0l5 1v4h-18z" />
      </g>
      <path d="M141 15.500h12" stroke="#fff" strokeDasharray="2 1" />
      <circle cx="201" cy="16" r="4" fill="#6a6df0" /><circle cx="210" cy="16" r="4" fill="#6a6df0" />
    </svg>
  </div>
);

const crossSectionIcon = (
  <g fill="none">
    <path d="M5 1Q0 10 5 19" stroke="#666" strokeWidth="1.500" />
    <path d="M1 19L18 1M4 13l13-3" stroke="#98a0da" strokeWidth="1.800" />
    <path d="M18 2v18" stroke="#888" strokeWidth="1.200" strokeDasharray="2 1" />
  </g>
);

const sagIcon = (
  <g fill="none">
    <path d="M4 2Q-1 10 4 19" stroke="#222" strokeWidth="1.500" />
    <path d="M3 11h14" stroke="#4a5cc0" strokeWidth="1.200" />
    <path d="M3 11l4-2v4z" fill="#4a5cc0" />
    <path d="M17 3v17" stroke="#999" strokeDasharray="2 1" />
  </g>
);

const App = () => (
  <div className="flex h-screen flex-col overflow-hidden bg-[#cacdd2] font-['Open_Sans','Noto_Sans',sans-serif] text-[#1a1a1a]">
    <RibbonStrip />
    <div className="flex min-h-0 grow">
      <SystemExplorer />
      <main className="flex min-w-0 grow flex-col overflow-hidden">
        <MainTabs />
        <div className="h-[2px] shrink-0 bg-[#bcd8fc]" />
        <LensToolbar />
        <PropertiesBar />
        <LensTable />
        <div className="grid min-h-0 w-[calc(100%+5px)] grow grid-cols-3 gap-x-[6px] border-t-6 border-[#8a8c98] bg-[#8a8c98]">
          <GraphPanel
            title="4: Surface Sag Cross Section 1"
            icon={crossSectionIcon}
            tabWidth="w-[250px]"
            footer="Surface Sag"
            notes={['3/3/2022', 'Surface 2.', 'Units are Millimeters.', 'Width = 10, Decenter x = 0, y = 0 Millimeters.', 'Cross section is oriented at an angle of 90 degrees.']}
          >
            <SagPlot
              yLabels={[{ text: '0.40', step: 1 }, { text: '0.30', step: 3 }, { text: '0.20', step: 5 }, { text: '0.10', step: 7 }, { text: '0', step: 9 }]}
              limits={['0.45', '-0.05']}
              curve={sphereCurve()}
            />
          </GraphPanel>
          <GraphPanel
            title="5: Surface Sag Cross Section 2"
            icon={crossSectionIcon}
            tabWidth="w-[250px]"
            footer="Surface Sag"
            notes={['3/3/2022', 'Surface 2.', 'Units are Millimeters.', 'Width = 10, Decenter x = 0, y = 0 Millimeters.', 'Cross section is oriented at an angle of 0 degrees.']}
          >
            <SagPlot
              yLabels={[{ text: '8.0', step: 1 }, { text: '4.0', step: 3 }, { text: '0', step: 5 }, { text: '-4.0', step: 7 }, { text: '-8.0', step: 9 }]}
              limits={['10.0', '-10.0']}
              curve="M88 129.500H461"
              cursor="X = -3.523, Y = 9.636"
            />
          </GraphPanel>
          <GraphPanel
            title="3: Surface Sag"
            icon={sagIcon}
            tabWidth="w-[145px]"
            footer="Surface Sag Map"
            notes={['3/3/2022', 'Surface 2.', 'Units are Millimeters.', '', 'Width = 10, Decenter x = 0, y = 0 Millimeters.']}
            overlay={<PlaneAnnotation />}
          >
            <SurfacePlot />
          </GraphPanel>
        </div>
      </main>
    </div>
    <ImeBar />
  </div>
);

export default App;
